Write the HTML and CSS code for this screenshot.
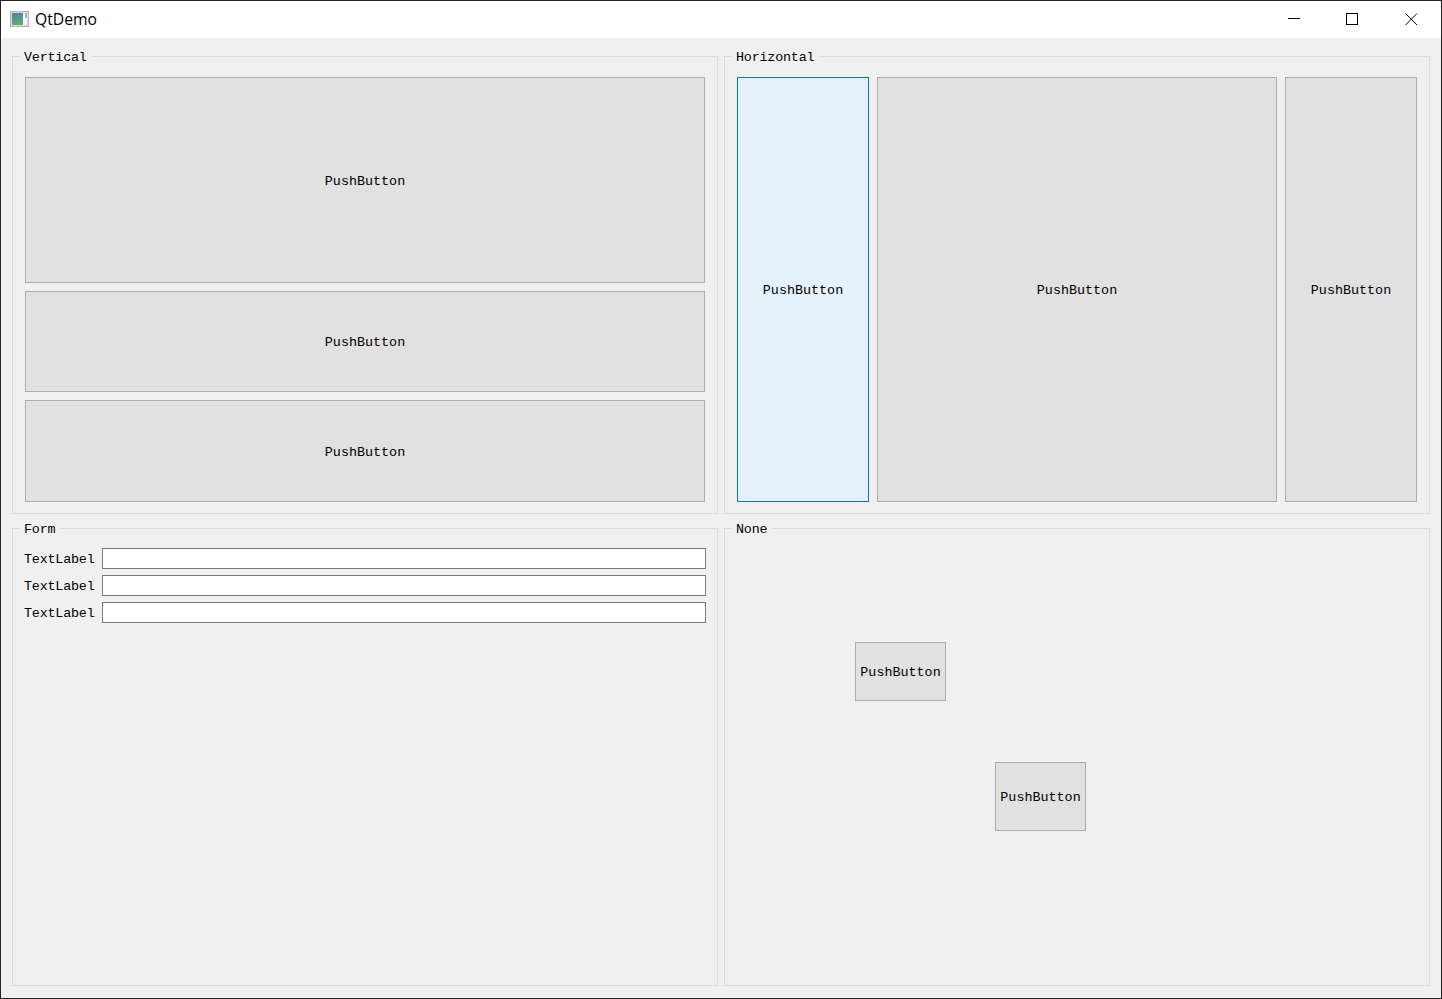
FILE: index.html
```html
<!DOCTYPE html>
<html lang="en">
<head>
<meta charset="utf-8">
<title>QtDemo</title>
<link rel="stylesheet" href="styles.css">
</head>
<body>
<div class="window">
  <header class="titlebar">
    <svg class="app-icon" width="20" height="17" viewBox="0 0 20 17">
      <defs>
        <linearGradient id="g" x1="0.2" y1="0" x2="0.5" y2="1">
          <stop offset="0" stop-color="#4f7fae"/>
          <stop offset="1" stop-color="#5cb06c"/>
        </linearGradient>
      </defs>
      <rect x="0.5" y="0.5" width="18" height="15" fill="#f6f6f6" stroke="#b4b4b4"/>
      <rect x="1.5" y="1.5" width="16" height="13" fill="none" stroke="#dcdcdc"/>
      <rect x="2" y="2" width="11" height="12" fill="url(#g)"/>
      <rect x="15" y="2" width="2" height="5" fill="#8fbccb"/>
    </svg>
    <span class="title">QtDemo</span>
    <div class="controls">
      <svg class="ctl" width="58" height="37" viewBox="0 0 58 37"><path d="M22 17.5h12" stroke="#000" fill="none"/></svg>
      <svg class="ctl" width="58" height="37" viewBox="0 0 58 37"><rect x="22.5" y="12.5" width="11" height="11" stroke="#000" fill="none"/></svg>
      <svg class="ctl" width="58" height="37" viewBox="0 0 58 37"><path d="M23.5 12.5l11.5 11.5M35 12.5l-11.5 11.5" stroke="#000" fill="none"/></svg>
    </div>
  </header>
  <main class="content">
    <section class="group group-vertical">
      <span class="legend">Vertical</span>
      <button class="btn v1">PushButton</button>
      <button class="btn v2">PushButton</button>
      <button class="btn v3">PushButton</button>
    </section>
    <section class="group group-horizontal">
      <span class="legend">Horizontal</span>
      <button class="btn focus h1">PushButton</button>
      <button class="btn h2">PushButton</button>
      <button class="btn h3">PushButton</button>
    </section>
    <section class="group group-form">
      <span class="legend">Form</span>
      <label class="label">TextLabel</label><input class="field" type="text">
      <label class="label">TextLabel</label><input class="field" type="text">
      <label class="label">TextLabel</label><input class="field" type="text">
    </section>
    <section class="group group-none">
      <span class="legend">None</span>
      <button class="btn free free-a">PushButton</button>
      <button class="btn free free-b">PushButton</button>
    </section>
  </main>
</div>
</body>
</html>
```
FILE: styles.css
```css
* { box-sizing: border-box; }
html, body { margin: 0; padding: 0; }
body { width: 1442px; height: 999px; overflow: hidden; background: #f0f0f0; }
.window {
  width: 1442px; height: 999px;
  border: 1px solid #242424;
  display: flex; flex-direction: column;
  background: #f0f0f0;
  font: 13.4px/16px "Liberation Mono", monospace;
  color: #000;
}
.titlebar {
  height: 37px; flex: none;
  background: #fff;
  display: flex; align-items: center;
  padding-left: 9px;
}
.app-icon { flex: none; }
.title {
  margin-left: 5px;
  margin-top: -2px;
  font: 15.7px/20px "Open Sans", sans-serif;
  color: #000;
}
.controls { margin-left: auto; display: flex; margin-right: 1px; }
.ctl { display: block; flex: none; }
.content {
  flex: 1;
  padding: 18px 11px 12px;
  display: grid;
  grid-template-columns: 706px 706px;
  grid-template-rows: 458px 458px;
  column-gap: 6px;
  row-gap: 14px;
}
.group {
  position: relative;
  border: 1px solid #dcdcdc;
}
.legend {
  position: absolute;
  left: 7px; top: -7px;
  padding: 0 5px 0 4px;
  background: #f0f0f0;
  line-height: 16px;
  letter-spacing: -0.2px;
  white-space: nowrap;
}
.btn {
  display: block;
  margin: 0; padding: 3px 0 0;
  font: inherit;
  color: #000;
  background: #e1e1e1;
  border: 1px solid #adadad;
  border-radius: 0;
  white-space: nowrap;
}
.btn.focus { background: #e5f1fb; border-color: #0078d7; }
.group-vertical {
  padding: 20px 12px 11px;
  display: grid;
  grid-template-rows: 206px 101px 102px;
  row-gap: 8px;
}
.group-horizontal {
  padding: 20px 12px 11px;
  display: grid;
  grid-template-columns: 132px 400px 132px;
  column-gap: 8px;
}
.group-form {
  padding: 19px 11px 0;
  display: grid;
  grid-template-columns: 78px 604px;
  grid-auto-rows: 21px;
  row-gap: 6px;
  align-content: start;
}
.label { line-height: 21px; padding-top: 1px; letter-spacing: -0.2px; white-space: nowrap; }
.field {
  display: block;
  width: 604px; height: 21px;
  margin: 0; padding: 0 2px;
  border: 1px solid #7a7a7a;
  border-radius: 0;
  background: #fff;
  outline: none;
}
.free { position: absolute; width: 91px; }
.free-a { left: 130px; top: 113px; height: 59px; }
.free-b { left: 270px; top: 233px; height: 69px; }
```
